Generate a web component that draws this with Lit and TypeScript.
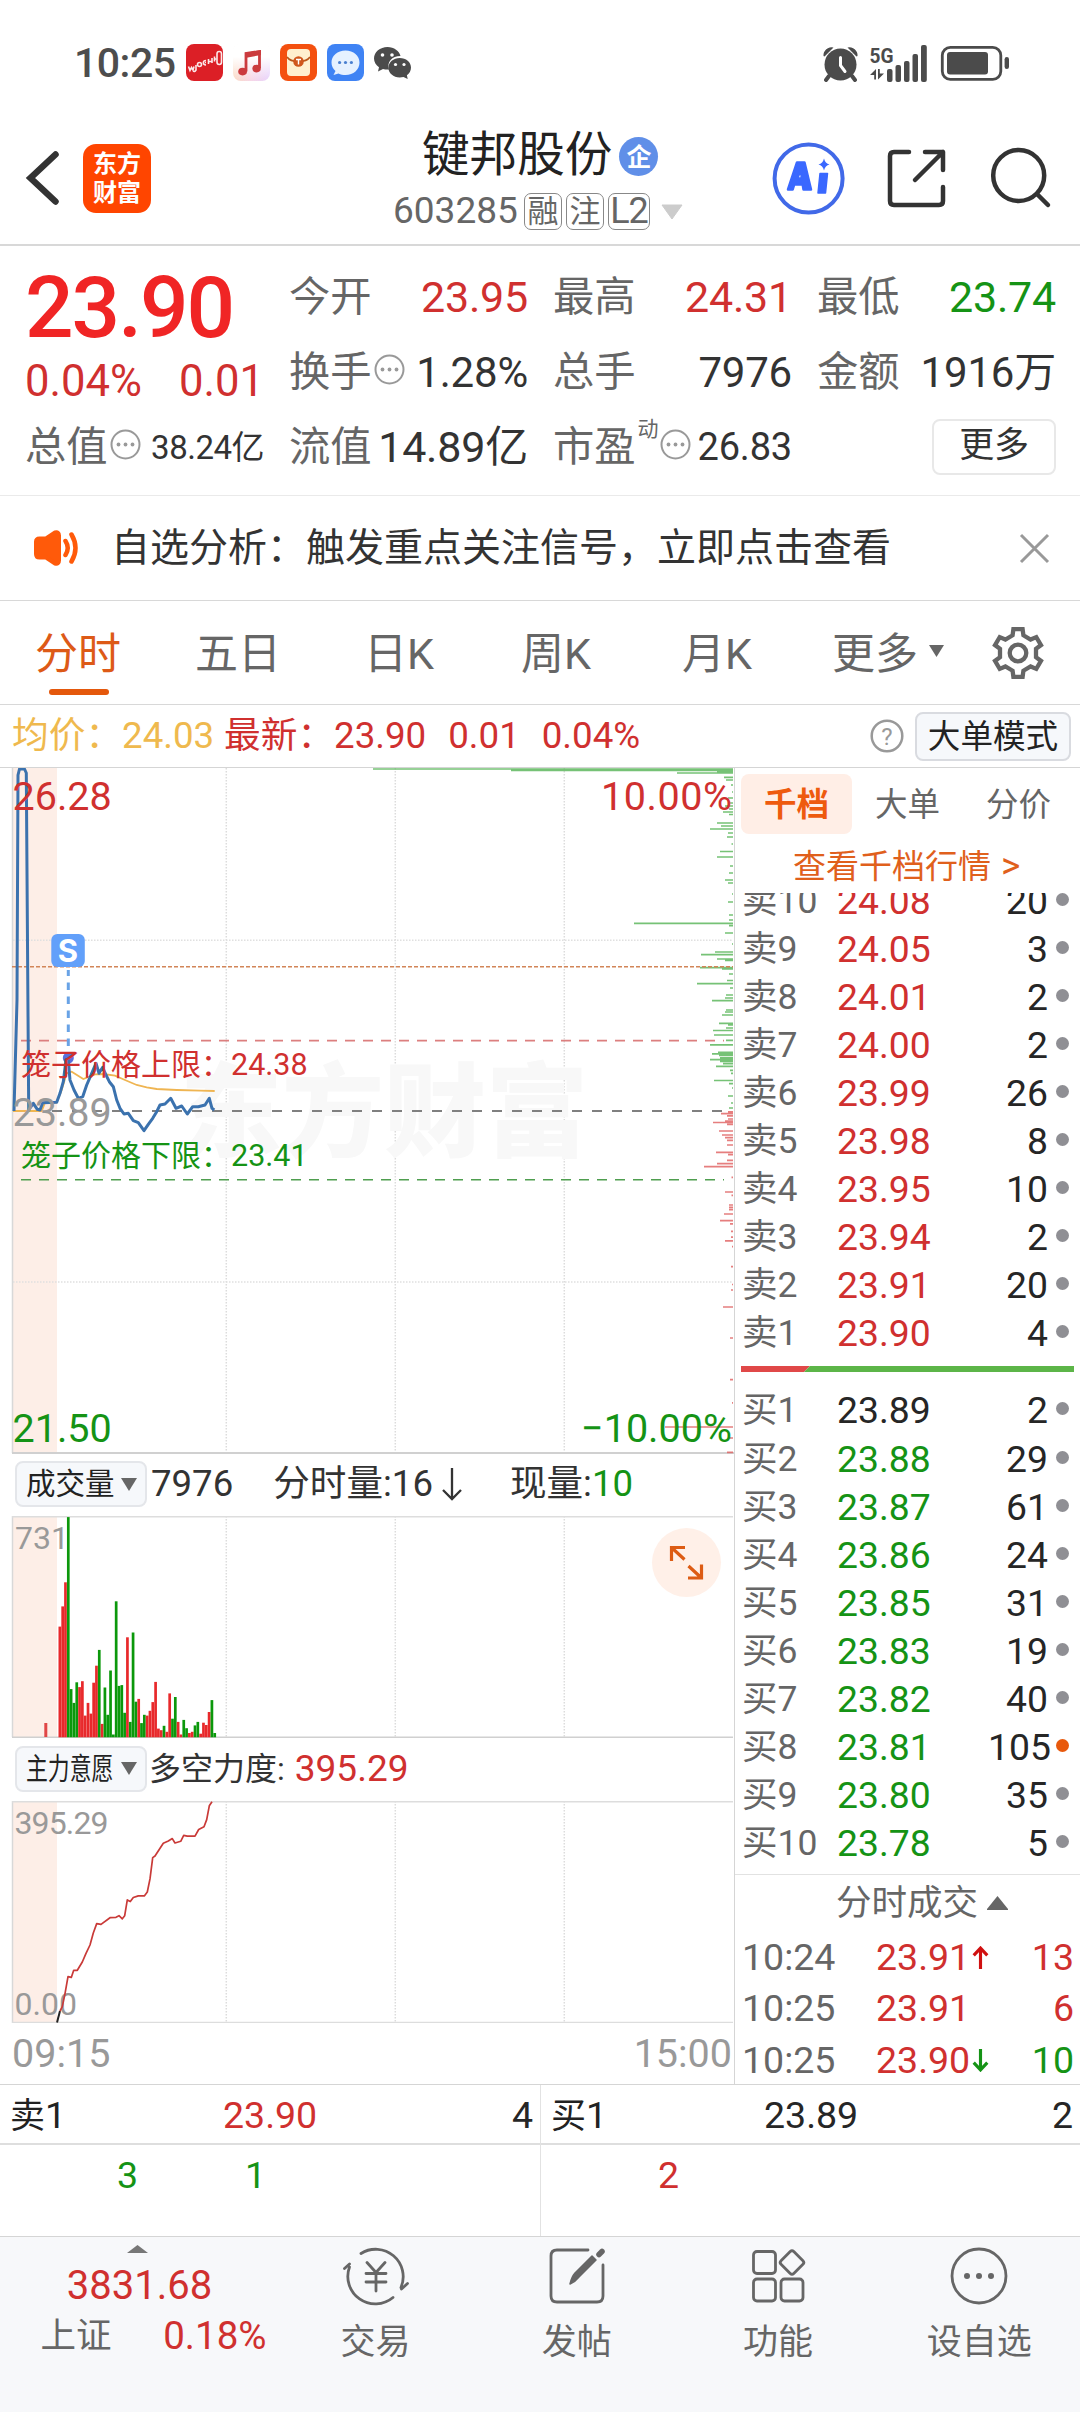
import { LitElement, html, svg, css } from "lit";
import { customElement, property } from "lit/decorators.js";
import { classMap } from "lit/directives/class-map.js";

const RIGHT = 733;

/* volume bars: [height, rising] per minute, from the open */
const VOLUME: [number, number][] = [
  [110.7, 1], [130.9, 1], [155, 1], [220.2, 0], [48.2, 0], [34.4, 0], [55, 0], [50.2, 1], [56.1, 1], [21.7, 1],
  [34.4, 1], [23.7, 1], [54.6, 1], [71.6, 1], [87.4, 0], [13.4, 1], [49.8, 0], [22.5, 0], [66.8, 0], [2.8, 0],
  [136, 0], [51.4, 0], [52.2, 0], [24.5, 0], [100, 1], [15.4, 0], [104.8, 0], [35.6, 0], [38.4, 1], [14.2, 0],
  [22.5, 0], [21.7, 1], [26.5, 1], [35.2, 1], [55.4, 1], [8.7, 1], [7.1, 1], [11.5, 0], [5.5, 1], [43.9, 1],
  [18.6, 0], [40.3, 0], [15.4, 1], [2.8, 1], [17.4, 0], [9.1, 0], [4.3, 1], [5.5, 1], [11.9, 0], [15.4, 0],
  [3.6, 1], [14.6, 1], [12.3, 1], [25.3, 1], [37.2, 0], [4.3, 0],
];

/* resting order depth: [y, length] */
const ASKS: [number, number][] = [
  [769, 360], [770.3, 222], [772, 16], [773, 56], [777.4, 9], [780, 7], [785, 2], [792, 1], [798, 5], [803, 3],
  [806, 8], [809, 4], [812, 10], [814.5, 4], [823, 16], [826, 12], [829, 23], [833, 5], [837, 6], [844, 1.5],
  [851.5, 13], [857, 16], [866, 3], [873, 4], [880, 8], [883, 5], [894, 1], [902, 5], [915, 4], [920, 4],
  [923.4, 99], [925.6, 4], [933, 8], [944, 1], [952, 18], [954.6, 32], [959, 16], [960.5, 8], [967.6, 33],
  [969, 11], [974, 4], [980.5, 6], [983.7, 36], [988, 3], [995, 7], [998, 8], [1000.6, 21], [1010, 7], [1012, 8],
  [1015, 11], [1023.4, 14], [1025, 5], [1028, 7], [1030.5, 20], [1035, 19], [1040.4, 7], [1044.8, 23], [1052.4, 15],
  [1053.8, 21], [1055.5, 14], [1057.8, 13], [1059.6, 23], [1061.4, 13], [1063.6, 10], [1066.3, 17], [1070.3, 3],
  [1073.4, 2], [1080.5, 19], [1083.7, 4], [1088, 1], [1096, 5], [1103, 2], [1108, 4],
];
const BIDS: [number, number][] = [
  [1111.8, 5], [1113.6, 12], [1115.8, 6], [1119, 5], [1121, 8], [1122.5, 20], [1124.3, 6], [1131, 14], [1135, 11],
  [1137.7, 8], [1140.4, 6], [1145, 6], [1152.4, 17], [1154.6, 5], [1160.4, 6], [1163.6, 16], [1166.7, 29],
  [1177.4, 1.5], [1192, 8], [1195.3, 1.5], [1205, 4], [1207.3, 4], [1209.6, 4], [1214, 9], [1220.7, 13], [1223.8, 3],
  [1231.4, 2], [1237.2, 2], [1240.8, 8], [1246.6, 1], [1266.7, 2], [1284.5, 1], [1290, 2], [1307, 10], [1338, 3],
  [1379.6, 3], [1402.9, 1], [1427, 68], [1438, 4], [1452.4, 6],
];

const PRICE =
  "14,1111 17,1000 18,775 19.5,769 24.5,769 26.3,773 28.7,1110 33.3,1103.3 37.3,1109.3 40,1110 42.7,1102.7 56.7,1102.3 60,1093.3 63.3,1081.7 66,1060 68.3,1060 70,1080 74,1090 78.3,1098.3 82.7,1096.7 86.7,1085 91.7,1073.3 96,1063.3 99,1073.3 102.7,1067.3 106,1075 109.3,1081.7 113.3,1086.7 116.7,1100 120,1108.3 124,1114 128.3,1113.3 133.3,1120.7 138.3,1122.7 144,1130.7 148.3,1124.3 152.7,1118.3 156.7,1111.7 160,1105 165,1104 170.7,1098.3 176,1108.3 181.7,1106 187.3,1114 192.7,1106.7 198.3,1106.7 205,1105 209.3,1098.3 212,1108.3 214.3,1110";
const AVERAGE =
  "13,1111 41.7,1111 45,1102.7 56.7,1102.3 61.7,1090 66.7,1073.3 71.7,1071.7 83.3,1079 95,1074.3 103.3,1074 115,1075.7 125,1080 136.7,1085 146.7,1087.3 156.7,1089 176.7,1090 200,1090.7 214.7,1091";
const FORCE =
  "60,2011 62.3,2006.6 65,1993.6 68,1976.6 71.3,1977.4 73.7,1970.3 77.3,1970.3 82.3,1962 86,1953.3 90,1945 93.3,1933 96.7,1923.6 101,1924.4 110,1917.7 116,1917.3 119,1915.7 122.3,1918.8 124.7,1915.7 127.3,1899.9 130.3,1901.5 133.3,1897.5 138.3,1895.9 144.3,1895.9 147.3,1892 150,1878.9 152.7,1857.6 155,1856 163.3,1843.3 168.3,1841 172.3,1838.6 175,1843 180.7,1841.3 183.7,1835.4 187.3,1836.2 195,1836.2 198.7,1829.5 204,1826.7 206.7,1819.6 209.3,1805.8 212,1801.8";

const SELLS: [string, string, string][] = [
  ["卖10", "24.08", "20"], ["卖9", "24.05", "3"], ["卖8", "24.01", "2"], ["卖7", "24.00", "2"], ["卖6", "23.99", "26"],
  ["卖5", "23.98", "8"], ["卖4", "23.95", "10"], ["卖3", "23.94", "2"], ["卖2", "23.91", "20"], ["卖1", "23.90", "4"],
];
const BUYS: [string, string, string][] = [
  ["买1", "23.89", "2"], ["买2", "23.88", "29"], ["买3", "23.87", "61"], ["买4", "23.86", "24"], ["买5", "23.85", "31"],
  ["买6", "23.83", "19"], ["买7", "23.82", "40"], ["买8", "23.81", "105"], ["买9", "23.80", "35"], ["买10", "23.78", "5"],
];

const shared = css`
  * { box-sizing: border-box; }
  :host {
    display: block;
    font-family: Roboto, "Noto Sans CJK SC", sans-serif;
    line-height: 1.25;
    color: #333;
    white-space: nowrap;
  }
  svg { display: block; flex: none; }
  .red { color: #d0302f; }
  .green { color: #159315; }
  .dark { color: #262626; }
`;

/* ---------- status bar ---------- */
@customElement("status-bar")
class StatusBar extends LitElement {
  static styles = [shared, css`
    .bar { height: 100px; padding: 25px 71px 0 74px; display: flex; justify-content: space-between; align-items: center; }
    .left { display: flex; align-items: center; gap: 10px; }
    .time { width: 102px; font-size: 41px; font-weight: 500; line-height: 50px; color: #4d4d4d; letter-spacing: -0.5px; }
    .net { font: 700 20px Roboto, sans-serif; }
  `];
  render() {
    return html`<div class="bar">
      <div class="left">
        <span class="time">10:25</span>
        <svg width="37" height="37" viewBox="0 0 37 37">
          <rect width="37" height="37" rx="8" fill="#dc1f26" />
          <g fill="none" stroke="#fff" stroke-width="1.6" opacity=".9">
            <path d="M2.500 22.500l1.500 4 1.500-3 1.500 2.500 1-3.500M10 21v5q-1.500 2.500-3 1" />
            <circle cx="13.500" cy="20.500" r="2" /><path d="M20 16.500c-3.500 0-3.500 4.500 0 4.500M19 18.500h1M22.500 15v5M22.500 17.500h3M26 14v5M28.500 12.500v5M28.500 15h2" />
            <rect x="31" y="7.500" width="4.500" height="13" rx="2.200" />
          </g>
        </svg>
        <svg width="37" height="37" viewBox="0 0 37 37">
          <defs><linearGradient id="m" x1="0" y1="1" x2="1" y2="1">
            <stop offset="0" stop-color="#fbd9c2" /><stop offset=".5" stop-color="#f6d5e6" /><stop offset="1" stop-color="#e6d0fb" /></linearGradient>
            <linearGradient id="w" x1="0" y1="0" x2="0" y2="1"><stop offset=".35" stop-color="#fff" /><stop offset="1" stop-color="#fff" stop-opacity="0" /></linearGradient></defs>
          <rect width="37" height="37" rx="8" fill="url(#m)" /><rect x="-.5" y="-.5" width="38" height="38" rx="8" fill="url(#w)" />
          <path d="M13 27.500V9.500L26.500 7.500V24" fill="none" stroke="#cb3b3e" stroke-width="2.800" />
          <path d="M12 9l16-3v5l-16 3z" fill="#cb3b3e" />
          <ellipse cx="9.600" cy="27.600" rx="4.400" ry="3.800" fill="#cb3b3e" /><ellipse cx="23.600" cy="24.600" rx="4.200" ry="3.800" fill="#cb3b3e" />
        </svg>
        <svg width="37" height="37" viewBox="0 0 37 37">
          <rect width="37" height="37" rx="8" fill="#f4500f" />
          <rect x="7" y="5" width="23" height="27" rx="4" fill="#fff0cf" />
          <path d="M7 13c4 6 19 6 23 0" fill="none" stroke="#b9561a" stroke-width="1.600" />
          <circle cx="18.500" cy="17.500" r="5.300" fill="#d0571c" /><path d="M16 15.500h5M18.500 15.500v5" stroke="#fff" stroke-width="1.400" />
        </svg>
        <svg width="37" height="37" viewBox="0 0 37 37">
          <rect width="37" height="37" rx="8" fill="#3f83f4" />
          <path d="M18.500 6.500c8 0 14 5 14 12s-6 12.500-14 12.500c-2.500 0-5-.5-7-1.500l-5 1.500 2-4c-2.500-2-4-5-4-8.500 0-7 6-12 14-12z" fill="#e6f1ff" />
          <g fill="#4a7fd0"><circle cx="12.600" cy="18.500" r="1.600" /><circle cx="18.500" cy="18.500" r="1.600" /><circle cx="24.400" cy="18.500" r="1.600" /></g>
        </svg>
        <svg width="37" height="37" viewBox="0 0 37 37" fill="#4b4b4b">
          <path d="M13.500 3C6 3 0 8 0 14.500c0 3.500 2 6.700 5 8.800L4 27.500l5-2.500c1.500.4 3 .6 4.500.6.8 0 1 0 1.500-.1C12.500 18 18 12 26.500 12 25.500 7 20 3 13.500 3z" />
          <path d="M37 23.500c0-5.400-5-9.500-11.300-9.500s-11.300 4.300-11.300 9.700S19.400 33.400 25.700 33.400c1.300 0 2.600-.2 3.800-.5l4.200 2-.8-3.600c2.500-1.800 4.100-4.600 4.100-7.800z" />
          <g fill="#fff"><circle cx="8.500" cy="11" r="1.800" /><circle cx="18" cy="11" r="1.800" /><circle cx="21.500" cy="20.500" r="1.600" /><circle cx="30" cy="20.500" r="1.600" /></g>
        </svg>
      </div>
      <svg width="187" height="38" viewBox="822 44 187 38" fill="#4b4b4b">
        <g><circle cx="840.500" cy="64.500" r="16" />
          <path d="M823.500 56a8 8 0 0 1 10-8.500l-9 9zM857.500 56a8 8 0 0 0-10-8.500l9 9z" />
          <path d="M829 76l-3 4M852 76l3 4" stroke="#4b4b4b" stroke-width="4" stroke-linecap="round" />
          <path d="M840.500 57.500v8l4.500 6" fill="none" stroke="#fff" stroke-width="3" stroke-linecap="round" /></g>
        <text class="net" x="869.500" y="62.500" textLength="24" lengthAdjust="spacingAndGlyphs">5G</text>
        <path d="M870 75l6-6v10.500h-1.800V75zM884 73.500l-6 6V69h1.800v4.500z" />
        <rect x="887" y="69" width="5.500" height="13" rx="2" /><rect x="895.500" y="65" width="5.500" height="17" rx="2" />
        <rect x="904" y="61" width="5.500" height="21" rx="2" /><rect x="912.500" y="54" width="5.500" height="28" rx="2" />
        <rect x="921" y="45" width="5.800" height="37" rx="2" />
        <rect x="942.300" y="47.300" width="58.500" height="32" rx="8" fill="none" stroke="#4b4b4b" stroke-width="2.800" />
        <rect x="947" y="52" width="41" height="22.500" rx="3" /><rect x="1004.600" y="57" width="4.400" height="12" rx="2.200" />
      </svg>
    </div>`;
  }
}

/* ---------- title bar ---------- */
@customElement("title-bar")
class TitleBar extends LitElement {
  static styles = [shared, css`
    .bar { height: 146px; border-bottom: 2px solid #d8d8d8; display: grid; grid-template-columns: 360px 1fr 340px; }
    .side { display: flex; align-items: center; height: 156px; }
    .left { padding-left: 25px; }
    .logo { margin-left: 24px; width: 68px; height: 69px; border-radius: 13px; background: #ff4500; color: #fff; display: flex;
      flex-direction: column; align-items: center; justify-content: center; font-size: 24px; font-weight: 700; line-height: 29px; padding-top: 2px; }
    .mid { padding: 25px 0 0 33px; }
    .name { height: 61px; padding-left: 29px; display: flex; align-items: center; gap: 7px; font-size: 47.600px; color: #222; }
    .qi { width: 39px; height: 39px; margin-top: 2px; border-radius: 50%; background: #608fe8; color: #fff; font-size: 25px; font-weight: 700;
      display: flex; align-items: center; justify-content: center; padding-top: 2px; }
    .codes { height: 51px; display: flex; align-items: center; font-size: 37px; color: #666; }
    .code { width: 131px; }
    .tag { height: 37px; width: 38px; margin-right: 4px; border: 1.500px solid #888; border-radius: 7px; font-size: 31px; line-height: 36px; text-align: center; }
    .wide { width: 42px; font-size: 36px; line-height: 35px; letter-spacing: -1px; }
    .drop { margin-left: 7px; }
  `];
  render() {
    return html`<div class="bar">
      <div class="side left">
        <svg width="34" height="58" viewBox="25 149 34 58"><path d="M55.500 154.500L30.500 178l25 23.500" fill="none" stroke="#333" stroke-width="6.500" stroke-linecap="round" /></svg>
        <div class="logo"><span>东方</span><span>财富</span></div>
      </div>
      <div class="mid">
        <div class="name"><span>键邦股份</span><span class="qi">企</span></div>
        <div class="codes"><span class="code">603285</span><span class="tag">融</span><span class="tag">注</span><span class="tag wide">L2</span>
          <svg class="drop" width="22" height="16" viewBox="0 0 22 16"><path d="M1 1h20L11 15z" fill="#ccc" stroke="#ccc" stroke-linejoin="round" /></svg></div>
      </div>
      <div class="side">
        <svg width="320" height="80" viewBox="740 138 320 80" fill="none" stroke="#333" stroke-width="4.500" stroke-linecap="round" stroke-linejoin="round">
          <circle cx="808.600" cy="178.500" r="34" stroke="#4169e8" stroke-width="4" />
          <path d="M788 189.500l9-27h7.500l6.500 27h-7.500l-.8-5h-8.500l-1.500 5zM801 169l-3.800 9.500h4.600z" fill="#3a68ff" stroke="#3a68ff" stroke-width="2.500" fill-rule="evenodd" />
          <path d="M820 173.500h7.500l-2 19.500h-7.500z" fill="#3a68ff" stroke="#3a68ff" stroke-width="1.500" />
          <path d="M824 158.500q1.200 4.800 5.500 6-4.300 1.200-5.500 6-1.200-4.800-5.500-6 4.300-1.200 5.500-6z" fill="#3a68ff" stroke="none" />
          <path d="M909 152h-15q-4 0-4 4v45q0 4 4 4h45q4 0 4-4v-14M925 152h18v18M943 152l-28 28" />
          <circle cx="1018.700" cy="175.500" r="25.500" /><path d="M1037 194l11 11" />
        </svg>
      </div>
    </div>`;
  }
}

const more = html`<svg width="31" height="31" viewBox="0 0 31 31" fill="#999"><circle cx="15.500" cy="15.500" r="14" fill="none" stroke="#999" stroke-width="2" />
  <circle cx="8.500" cy="15.500" r="1.900" /><circle cx="15.500" cy="15.500" r="1.900" /><circle cx="22.500" cy="15.500" r="1.900" /></svg>`;

/* ---------- quote summary ---------- */
@customElement("quote-panel")
class QuotePanel extends LitElement {
  static styles = [shared, css`
    .panel { height: 250px; border-bottom: 1.500px solid #eaeaea; display: grid; grid-template-columns: 239px 239px 239px 239px; column-gap: 25px; padding: 14px 0 0 25px; }
    .col { display: grid; grid-template-rows: 75px 75px 75px; }
    .first { grid-template-rows: 90px 60px 75px; }
    .cell { display: flex; align-items: center; font-size: 43px; line-height: 75px; letter-spacing: -0.200px; }
    .cell b { margin-left: auto; font-weight: 400; }
    .cell i { font-style: normal; font-size: 41.300px; color: #666; letter-spacing: 0; }
    .cell svg { margin: -6px 0 0 2px; }
    .big { font-size: 85.500px; font-weight: 500; color: #f02525; line-height: 97px; letter-spacing: -2px; }
    .chg { display: flex; gap: 37px; font-size: 43.600px; line-height: 64px; }
    .cell .sm { font-size: 33px; letter-spacing: -0.500px; margin-right: 0; }
    .cell .n4 { font-size: 42px; }
    .cell .md { font-size: 38px; }
    .sup { font-size: 21px; color: #666; margin: -38px 0 0 2px; align-self: center; line-height: 24px; }
    .btn { margin-left: auto; width: 124px; height: 56px; border: 2px solid #e8e8e8; border-radius: 8px; text-align: center; font-size: 35px; line-height: 50px; margin-top: -2px; }
  `];
  render() {
    return html`<div class="panel">
      <div class="col first">
        <div class="big">23.90</div>
        <div class="chg red"><span>0.04%</span><span>0.01</span></div>
        <div class="cell"><i>总值</i>${more}<b class="sm">38.24亿</b></div>
      </div>
      <div class="col">
        <div class="cell"><i>今开</i><b class="red">23.95</b></div>
        <div class="cell"><i>换手</i>${more}<b class="n4">1.28%</b></div>
        <div class="cell"><i>流值</i><b>14.89亿</b></div>
      </div>
      <div class="col">
        <div class="cell"><i>最高</i><b class="red">24.31</b></div>
        <div class="cell"><i>总手</i><b class="n4">7976</b></div>
        <div class="cell"><i>市盈</i><span class="sup">动</span>${more}<b class="md">26.83</b></div>
      </div>
      <div class="col">
        <div class="cell"><i>最低</i><b class="green">23.74</b></div>
        <div class="cell"><i>金额</i><b class="n4">1916万</b></div>
        <div class="cell"><span class="btn">更多</span></div>
      </div>
    </div>`;
  }
}

/* ---------- notice, period tabs, price line ---------- */
const gear = Array.from({ length: 6 }, (_, k) => {
  const at = (deg: number, r: number) => {
    const a = ((deg - 90 + k * 60) * Math.PI) / 180;
    return `${(r * Math.cos(a)).toFixed(1)},${(r * Math.sin(a)).toFixed(1)}`;
  };
  return `${at(-17, 18.5)} ${at(-11, 24.3)} ${at(11, 24.3)} ${at(17, 18.5)}`;
}).join(" ");

@customElement("chart-tabs")
class ChartTabs extends LitElement {
  static styles = [shared, css`
    .notice { height: 105px; border-bottom: 1.500px solid #d8d8d8; padding: 0 30px 0 33px; display: flex; align-items: center; font-size: 39px; }
    .msg { margin: 0 0 0 32px; flex: 1; line-height: 60px; }
    .tabs { height: 104px; border-bottom: 1.500px solid #d8d8d8; display: flex; align-items: center; font-size: 43px; color: #666; padding-left: 35px; }
    .tab { height: 103px; line-height: 106px; width: 160px; }
    .t2 { width: 169px; } .t3 { width: 157px; } .t4 { width: 161px; } .t5 { width: 150px; } .t6 { width: 87px; }
    .on { color: #dd5a17; display: flex; flex-direction: column; width: 160px; }
    .on span { height: 88px; }
    .on::after { content: ""; margin-left: 14px; width: 60px; height: 6px; border-radius: 3px; background: #e4580c; }
    .gear { margin-left: 46px; }
    .tri { margin: -3px 0 0 10px; }
    .info { height: 63px; border-bottom: 1.500px solid #d5d5d5; display: flex; align-items: center; font-size: 36.700px; line-height: 62px; padding: 0 9px 0 12px; }
    .avg { color: #efb94e; width: 212px; }
    .cur { flex: 1; display: flex; }
    .cur span { margin-right: 22px; }
    .mode { margin-left: 11px; width: 156px; height: 49px; border: 2px solid #d9dbe0; border-radius: 8px; background: #f6f8fb; color: #222; text-align: center; font-size: 32.600px; line-height: 46px; }
    .q { font: 24px Roboto, sans-serif; }
  `];
  render() {
    return html`
      <div class="notice">
        <svg width="46" height="38" viewBox="33 528 46 38"><path d="M36 541q0-3.500 3.500-3.500h6.500l9-6q4-1 4 3v25q0 4-4 3l-9-6h-6.500q-3.500 0-3.500-3.500z" fill="#ff5a0a" stroke="#ff5a0a" stroke-width="4" stroke-linejoin="round" />
          <path d="M65.500 540q4.500 7 0 14M71.500 533.500q8 13.500 0 27" fill="none" stroke="#ff5a0a" stroke-width="4.500" stroke-linecap="round" /></svg>
        <span class="msg">自选分析：触发重点关注信号，立即点击查看</span>
        <svg width="31" height="31" viewBox="0 0 31 31"><path d="M2 2l27 27M29 2L2 29" stroke="#999" stroke-width="3" /></svg>
      </div>
      <div class="tabs">
        <div class="tab on"><span>分时</span></div><div class="tab t2">五日</div><div class="tab t3">日K</div>
        <div class="tab t4">周K</div><div class="tab t5">月K</div><div class="tab t6">更多</div>
        <svg class="tri" width="15" height="12" viewBox="0 0 15 12"><path d="M0 0h15L7.500 12z" fill="#666" /></svg>
        <svg class="gear" width="56" height="56" viewBox="-28 -28 56 56" fill="none" stroke="#666" stroke-width="4.300"><polygon points=${gear} /><circle r="8.300" /></svg>
      </div>
      <div class="info">
        <span class="avg">均价：24.03</span>
        <div class="cur red"><span>最新：23.90</span><span>0.01</span><span>0.04%</span></div>
        <svg width="34" height="34" viewBox="0 0 34 34"><circle cx="17" cy="17" r="15.300" fill="none" stroke="#999" stroke-width="2.500" /><text class="q" x="17" y="25.500" text-anchor="middle" fill="#999">?</text></svg>
        <span class="mode">大单模式</span>
      </div>`;
  }
}

/* ---------- charts ---------- */
@customElement("intraday-charts")
class IntradayCharts extends LitElement {
  static styles = [shared, css`
    :host { width: 734px; }
    text { font-family: Roboto, "Noto Sans CJK SC", sans-serif; }
    .l { font-size: 39.500px; } .s { font-size: 32px; fill: #999; } .c { font-size: 30px; } .n { font-size: 30.500px; }
    .mark { font-size: 102px; font-weight: 900; fill: #f8f8f8; }
    .sell { font: 700 31px Inter, sans-serif; fill: #fff; }
    .r { fill: #d0302f; } .g { fill: #159315; } .y { fill: #999; }
    .head { height: 62px; padding: 0 0 2px 15px; display: flex; align-items: center; font-size: 36.600px; line-height: 60px; }
    .force { height: 63px; }
    .pick { width: 132px; height: 46px; margin-right: 4px; border: 2px solid #e4e6ea; border-radius: 8px; background: #f6f8fb; color: #222; padding: 0 8px 0 9px;
      display: flex; align-items: center; justify-content: space-between; font-size: 29.500px; line-height: 42px; }
    .slim { width: 88px; }
    .slim span { display: inline-block; transform: scaleX(0.74); transform-origin: 0 50%; }
    .min { margin-left: 40px; } .now { margin-left: 48px; }
    .dir { margin-left: 9px; }
    .label { font-size: 32px; margin: 0 10px 0 -2px; }
    .val { font-size: 37px; }
    .axis { height: 61px; padding: 0 2px 0 12px; display: flex; justify-content: space-between; font-size: 39.500px; line-height: 62px; color: #999; }
  `];
  private grid(top: number, bottom: number) {
    return svg`<rect x="13" y=${top} width="44" height=${bottom - top} fill="#fdeee7" />
      <path d=${`M12.500 ${top}V${bottom}`} stroke="#d8d8d8" stroke-width="1.500" />
      <path d=${[226, 395, 564].map((x) => `M${x}.300 ${top}V${bottom}`).join("")} stroke="#dcdcdc" stroke-width="1.500" stroke-dasharray="1.500 1.500" />`;
  }
  private caret = html`<svg width="16" height="13" viewBox="0 0 16 13"><path d="M0 0h16L8 13z" fill="#666" /></svg>`;
  render() {
    return html`
      <svg width="734" height="686" viewBox="0 768 734 686">
        ${this.grid(768, 1453)}
        <text class="mark" x="180" y="1149">东方财富</text>
        <path d="M13 940.300H733M13 1282H733" stroke="#e0e0e0" stroke-width="1.500" stroke-dasharray="1.500 1.500" />
        <path d="M12 1453H734" stroke="#d0d0d0" stroke-width="2" />
        <path d=${ASKS.map(([y, n]) => `M${RIGHT - n} ${y}H${RIGHT}`).join("")} stroke="#5fb85f" stroke-width="1.700" opacity=".85" />
        <path d=${BIDS.map(([y, n]) => `M${RIGHT - n} ${y}H${RIGHT}`).join("")} stroke="#e05f5f" stroke-width="1.700" opacity=".8" />
        <path d="M12 966.700H733" stroke="#d28558" stroke-width="1.600" stroke-dasharray="4 2" />
        <path d="M21 1040.700H724" stroke="#dc7f7f" stroke-width="1.700" stroke-dasharray="10 8" />
        <path d="M21 1179.700H724" stroke="#4f9e4f" stroke-width="1.500" stroke-dasharray="10 8" />
        <path d="M52 1111H731" stroke="#808080" stroke-width="1.900" stroke-dasharray="10 10" />
        <path d="M68.300 970V1046" stroke="#69a3e6" stroke-width="3" stroke-dasharray="7.500 6.500" stroke-dashoffset="1.500" />
        <circle cx="68.300" cy="1058" r="5.500" fill="#5b6fdc" />
        <polyline points=${AVERAGE} fill="none" stroke="#efb552" stroke-width="1.800" />
        <polyline points=${PRICE} fill="none" stroke="#3b72ae" stroke-width="3" stroke-linejoin="round" />
        <rect x="51.300" y="934" width="33.500" height="33" rx="6" fill="#62a0fa" />
        <text class="sell" x="68" y="961.500" text-anchor="middle">S</text>
        <text class="c r" x="21" y="1075">笼子价格上限：</text><text class="n r" x="231" y="1075">24.38</text>
        <text class="c g" x="21" y="1165.500">笼子价格下限：</text><text class="n g" x="231" y="1165.500">23.41</text>
        <text class="l r" x="12.500" y="810">26.28</text>
        <text class="l r" x="732" y="810" text-anchor="end" textLength="131">10.00%</text>
        <text class="l y" x="12.500" y="1125.500">23.89</text>
        <text class="l g" x="12.500" y="1441.500">21.50</text>
        <text class="l g" x="732" y="1441.500" text-anchor="end" textLength="151">−10.00%</text>
      </svg>
      <div class="head"><span class="pick">成交量${this.caret}</span><span>7976</span><span class="min">分时量:16</span>
        <svg class="dir" width="20" height="34" viewBox="0 0 20 34"><path d="M10 1V32M1 23l9 9 9-9" fill="none" stroke="#333" stroke-width="2.300" /></svg>
        <span class="now">现量:</span><span class="green">10</span></div>
      <svg width="734" height="222" viewBox="0 1516 734 222">
        ${this.grid(1516, 1737)}
        <path d="M12 1516.700H733" stroke="#ddd" stroke-width="1.500" /><path d="M12 1737.200H733" stroke="#d0d0d0" stroke-width="1.600" />
        <rect x="44.300" y="1723" width="3" height="14" fill="#e04646" />
        ${VOLUME.map(([h, up], i) => svg`<rect x=${(58.5 + i * 2.816).toFixed(2)} y=${1737.3 - h} width="2.700" height=${h} fill=${up ? "#e8292b" : "#0b980b"} />`)}
        <text class="s" x="15" y="1549">731</text>
        <circle cx="686.500" cy="1562.600" r="34.500" fill="#fff0e8" />
        <path d="M671.500 1561v-13.500h13.500M671.500 1547.500l13 12M688 1578h13.500v-13.500M701.500 1578l-13-12" fill="none" stroke="#dd5c14" stroke-width="3.200" />
      </svg>
      <div class="head force"><span class="pick"><span class="slim"><span>主力意愿</span></span>${this.caret}</span><span class="label">多空力度:</span><span class="val red">395.29</span></div>
      <svg width="734" height="222" viewBox="0 1801 734 222">
        ${this.grid(1801, 2023)}
        <path d="M12 1801.700H733M12 2022.500H733" stroke="#ddd" stroke-width="1.500" />
        <text class="s" x="14.500" y="1833.500" textLength="94">395.29</text><text class="s" x="14.500" y="2015">0.00</text>
        <path d="M57 2022.500L60 2011" stroke="#222" stroke-width="2" />
        <polyline points=${FORCE} fill="none" stroke="#c93a38" stroke-width="1.700" stroke-linejoin="round" />
      </svg>
      <div class="axis"><span>09:15</span><span>15:00</span></div>`;
  }
}

/* ---------- order book ---------- */
@customElement("order-book")
class OrderBook extends LitElement {
  static styles = [shared, css`
    :host { width: 346px; border-left: 1.500px solid #d5d5d5; }
    .tabs { height: 72px; padding: 6px 6px 0 6px; display: flex; font-size: 32.500px; color: #666; }
    .tab { width: 111px; height: 60px; line-height: 63px; text-align: center; border-radius: 8px; }
    .on { background: #ffeee6; color: #ee5a0e; font-weight: 700; }
    .link { height: 53px; line-height: 51px; padding-left: 58px; font-size: 33px; color: #e0601c; }
    .link span { margin-left: 10px; font-size: 37px; }
    .book { height: 982px; overflow: hidden; border-bottom: 1.500px solid #e2e2e2; }
    .sells { margin-top: -17.500px; }
    .row { height: 48.050px; line-height: 48px; display: grid; grid-template-columns: 95px 1fr 60px 32px; padding: 0 0 0 7px; font-size: 37.300px; align-items: center; }
    .side { color: #666; font-size: 35.500px; line-height: 50px; }
    .qty { text-align: right; color: #262626; }
    .dot { width: 13px; height: 13px; border-radius: 50%; background: #8f8f94; margin: -3px 0 0 8px; }
    .hot { background: #e8590c; }
    .ratio { display: block; margin: 10.500px 0 13px 6px; }
    .head { height: 56px; display: flex; align-items: center; padding-left: 101px; gap: 9px; font-size: 35.500px; line-height: 56px; color: #666; }
    .trade { height: 51.400px; line-height: 53px; display: grid; grid-template-columns: 134px 96px 1fr auto; padding: 0 6px 0 7px; font-size: 37.500px; align-items: center; }
    .time { color: #666; }
  `];
  private row([side, price, qty]: [string, string, string], tone: string) {
    return html`<div class="row"><span class="side">${side}</span><span class=${tone}>${price}</span><span class="qty">${qty}</span>
      <span class=${classMap({ dot: true, hot: +qty >= 100 })}></span></div>`;
  }
  private trade(time: string, price: string, dir: string, qty: string, tone: string) {
    const arrow = dir === "up" ? "M8 22V2M1.500 9L8 2l6.500 7" : "M8 0v20M1.500 13L8 20l6.500-7";
    return html`<div class="trade"><span class="time">${time}</span><span class="red">${price}</span>
      ${dir ? html`<svg width="17" height="23" viewBox="0 0 16 22"><path d=${arrow} fill="none" stroke=${dir === "up" ? "#d01010" : "#159315"} stroke-width="3" /></svg>` : html`<span></span>`}
      <span class=${tone}>${qty}</span></div>`;
  }
  render() {
    return html`
      <div class="tabs"><span class="tab on">千档</span><span class="tab">大单</span><span class="tab">分价</span></div>
      <div class="link">查看千档行情<span>&gt;</span></div>
      <div class="book">
        <div class="sells">${SELLS.map((r) => this.row(r, "red"))}</div>
        <svg class="ratio" width="333" height="6" viewBox="0 0 333 6"><path d="M0 0h69l-6 6H0z" fill="#e04848" /><path d="M69 0h264v6H63z" fill="#5cb548" /></svg>
        ${BUYS.map((r, i) => this.row(r, i === 0 ? "dark" : "green"))}
      </div>
      <div class="head"><span>分时成交</span><svg width="21" height="14" viewBox="0 0 21 14"><path d="M10.500 0L21 13v1H0v-1z" fill="#666" /></svg></div>
      ${this.trade("10:24", "23.91", "up", "13", "red")}
      ${this.trade("10:25", "23.91", "", "6", "red")}
      ${this.trade("10:25", "23.90", "down", "10", "green")}`;
  }
}

/* ---------- best bid / ask queue ---------- */
@customElement("queue-side")
class QueueSide extends LitElement {
  @property() side = "";
  @property() price = "";
  @property() qty = "";
  @property() tone = "";
  @property() queueTone = "";
  @property({ type: Array }) queue: string[] = [];
  static styles = [shared, css`
    :host { height: 151px; font-size: 37.500px; }
    .top { height: 60px; line-height: 61px; border-bottom: 2px solid #dedede; display: grid; grid-template-columns: 213px 1fr auto; padding: 0 7px 0 10px; }
    .side { color: #222; }
    .queue { display: grid; grid-template-columns: repeat(4, 128px); padding-left: 10px; line-height: 60px; }
    .queue span { text-align: right; }
    .side i { font-style: normal; font-size: 35px; }
  `];
  render() {
    return html`<div class="top"><span class="side"><i>${this.side}</i>1</span><span class=${this.tone}>${this.price}</span><span class="dark">${this.qty}</span></div>
      <div class="queue ${this.queueTone}">${this.queue.map((q) => html`<span>${q}</span>`)}</div>`;
  }
}

/* ---------- bottom navigation ---------- */
@customElement("bottom-nav")
class BottomNav extends LitElement {
  static styles = [shared, css`
    .nav { height: 177px; background: #f7f8fa; border-top: 1.500px solid #d5d5d5; display: grid; grid-template-columns: 275px repeat(4, 201.250px); }
    .index { display: flex; flex-direction: column; align-items: center; padding-top: 8px; }
    .value { font-size: 40px; line-height: 52px; margin-top: 7px; padding-left: 4px; }
    .idx { display: flex; width: 226px; justify-content: space-between; line-height: 46px; font-size: 38.500px; margin: 1px 0 0 32px; }
    .nm { font-size: 35.500px; color: #666; }
    .item { display: flex; flex-direction: column; align-items: center; padding-top: 7px; font-size: 35px; color: #666; line-height: 48px; gap: 11px; }
  `];
  render() {
    const item = (label: string, icon: unknown) => html`<div class="item">
      <svg width="68" height="64" viewBox="-34 -32 68 64" fill="none" stroke="#666" stroke-width="2.800" stroke-linecap="round" stroke-linejoin="round">${icon}</svg><span>${label}</span></div>`;
    return html`<div class="nav">
      <div class="index"><svg width="21" height="8" viewBox="0 0 21 8"><path d="M10.500 0L21 8H0z" fill="#777" /></svg>
        <div class="value red">3831.68</div>
        <div class="idx"><span class="nm">上证</span><span class="red">0.18%</span></div></div>
      ${item("交易", svg`<path d="M-15 -22.500A27.500 27.500 0 0 1 25 11.500M17 21.500A27.500 27.500 0 0 1 -26.500 -9M-26.500 -12l-5 4.500M25.500 13l6-5.500" />
        <path d="M-9 -13.500L0 -3.500l9-10M-10 -2.500h20M-10 6h20M0 -2.500V15" />`)}
      ${item("发帖", svg`<path d="M11 -26h-31q-6 0-6 6v40q0 6 6 6h40q6 0 6-6v-31" />
        <path d="M-7 8q1.500-7 5-11l17-17 4 4L2 1q-4 5-9 7z" fill="#666" stroke-width="1.500" /><path d="M22 -21.500l3-3" stroke-width="5.500" />`)}
      ${item("功能", svg`<rect x="-24.500" y="-24.500" width="22" height="22" rx="3.500" /><rect x="-24.500" y="3" width="22" height="22" rx="3.500" />
        <rect x="3" y="3" width="22" height="22" rx="3.500" /><rect x="5" y="-22.500" width="18" height="18" rx="2.500" transform="rotate(45 14 -13.500)" />`)}
      ${item("设自选", svg`<circle r="27" /><g fill="#666" stroke="none"><circle cx="-12" r="3" /><circle r="3" /><circle cx="12" r="3" /></g>`)}
    </div>`;
  }
}

@customElement("app-root")
class AppRoot extends LitElement {
  static styles = [shared, css`
    :host { width: 1080px; height: 2412px; background: #fff; overflow: hidden; }
    .main { display: flex; height: 1316px; overflow: hidden; }
    .queues { display: grid; grid-template-columns: 540px 540px; border-top: 1.500px solid #d5d5d5; }
    .buy { border-left: 1.500px solid #e2e2e2; }
  `];
  render() {
    return html`
      <status-bar></status-bar>
      <title-bar></title-bar>
      <quote-panel></quote-panel>
      <chart-tabs></chart-tabs>
      <div class="main"><intraday-charts></intraday-charts><order-book></order-book></div>
      <div class="queues">
        <queue-side side="卖" price="23.90" qty="4" tone="red" queueTone="green" .queue=${["3", "1"]}></queue-side>
        <queue-side class="buy" side="买" price="23.89" qty="2" tone="dark" queueTone="red" .queue=${["2"]}></queue-side>
      </div>
      <bottom-nav></bottom-nav>`;
  }
}
